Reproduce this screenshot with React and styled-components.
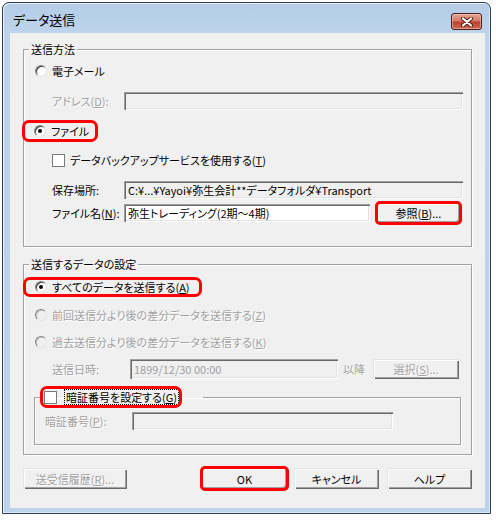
import styled, { createGlobalStyle } from 'styled-components';

const GlobalStyle = createGlobalStyle`
  body {
    margin: 0;
    background: #fff;
    font-family: "Noto Sans CJK JP", "Noto Sans", sans-serif;
    font-size: 11px;
    font-feature-settings: "palt";
  }
`;

const App = () => {
  return (
    <>
      <GlobalStyle />
      <Window>
        <TitleBar>
          <Title>データ送信</Title>
          <CloseBtn>
            <svg width="14" height="10" viewBox="0 0 14 10">
              <path d="M3 1.5 L11 8.5 M11 1.5 L3 8.5" stroke="#4a1c14" strokeWidth="4" strokeLinecap="round" />
              <path d="M3 1.5 L11 8.5 M11 1.5 L3 8.5" stroke="#fff" strokeWidth="2.2" strokeLinecap="round" />
            </svg>
          </CloseBtn>
        </TitleBar>
        <Body>
          <Group $mt={9} $pb={23}>
            <Legend>送信方法</Legend>
            <Row $mt={5} $pl={11}>
              <Radio />
              <Text>電子メール</Text>
            </Row>
            <Row $mt={10} $pl={28}>
              <FieldLabel $w={72} $disabled>アドレス(<u>D</u>):</FieldLabel>
              <Field $w={339} $gray />
            </Row>
            <Row $mt={10} $pl={1}>
              <Highlight $pl={9} $pr={6} $h={16}>
                <Radio $checked />
                <Text>ファイル</Text>
              </Highlight>
            </Row>
            <Row $mt={9} $pl={28}>
              <Check />
              <Text>データバックアップサービスを使用する(<u>T</u>)</Text>
            </Row>
            <Row $mt={10} $pl={28}>
              <FieldLabel $w={72}>保存場所:</FieldLabel>
              <Field $w={339} $gray>C:¥...¥Yayoi¥弥生会計**データフォルダ¥Transport</Field>
            </Row>
            <Row $mt={3} $pl={28}>
              <FieldLabel $w={72}>ファイル名(<u>N</u>):</FieldLabel>
              <Field $w={246}>弥生トレーディング(2期〜4期)</Field>
              <Button $w={83} $ml={7} $red>参照(<u>B</u>)...</Button>
            </Row>
          </Group>

          <Group $mt={10} $pb={9}>
            <Legend>送信するデータの設定</Legend>
            <Row $mt={6} $pl={2}>
              <Highlight $pl={9} $pr={9} $h={14}>
                <Radio $checked />
                <Text>すべてのデータを送信する(<u>A</u>)</Text>
              </Highlight>
            </Row>
            <Row $mt={8} $pl={11}>
              <Radio $disabled />
              <Text $disabled>前回送信分より後の差分データを送信する(<u>Z</u>)</Text>
            </Row>
            <Row $mt={7} $pl={11}>
              <Radio $disabled />
              <Text $disabled>過去送信分より後の差分データを送信する(<u>K</u>)</Text>
            </Row>
            <Row $mt={7} $pl={28}>
              <FieldLabel $w={78} $disabled>送信日時:</FieldLabel>
              <Field $w={208} $h={20} $gray $disabled>1899/12/30 00:00</Field>
              <Text $disabled $ml={5}>以降</Text>
              <Button $w={86} $ml={8} $disabled>選択(<u>S</u>)...</Button>
            </Row>
            <InnerGroup>
              <InnerLegend>
                <Highlight $pl={1} $pr={1} $h={16}>
                  <Check />
                  <Focus>暗証番号を設定する(<u>G</u>)</Focus>
                </Highlight>
              </InnerLegend>
              <Row $mt={4} $pl={10}>
                <FieldLabel $w={87} $disabled>暗証番号(<u>P</u>):</FieldLabel>
                <Field $w={261} $gray />
              </Row>
            </InnerGroup>
          </Group>

          <Footer>
            <Button $w={104} $h={21} $disabled>送受信履歴(<u>R</u>)...</Button>
            <Button $w={85} $h={21} $ml="auto" $red>OK</Button>
            <Button $w={85} $h={21} $ml={7}>キャンセル</Button>
            <Button $w={85} $h={21} $ml={8}>ヘルプ</Button>
          </Footer>
        </Body>
      </Window>
    </>
  );
};

const Window = styled.div`
  margin: 2px 0 0 2px;
  width: 487px;
  border: 1px solid #2e3e52;
  border-radius: 7px 7px 0 0;
  background: linear-gradient(to bottom, #b4cce7 0, #bed4ec 30px, #bcd3eb 100%);
  box-shadow: inset 1px 1px 0 rgba(255, 255, 255, 0.7), inset -1px -1px 0 rgba(255, 255, 255, 0.5);
`;

const TitleBar = styled.div`
  display: flex;
  align-items: center;
  height: 30px;
  padding: 3px 8px 0 10px;
  box-sizing: border-box;
`;

const Title = styled.div`
  font-size: 13px;
  line-height: 16px;
  color: #000;
  flex: 1;
`;

const CloseBtn = styled.div`
  display: flex;
  align-items: center;
  justify-content: center;
  width: 31px;
  height: 17px;
  margin-top: 4px;
  box-sizing: border-box;
  border: 1px solid #4b1f18;
  border-radius: 3px;
  background: linear-gradient(to bottom, #e4a596 0, #d37a67 45%, #b9412d 55%, #cf6a52 100%);
  box-shadow: inset 0 0 0 1px rgba(255, 220, 210, 0.45);
`;

const Body = styled.div`
  margin: 0 5px 5px 7px;
  height: 475px;
  box-sizing: border-box;
  padding: 0 13px;
  background: #f0f0f0;
  display: flex;
  flex-direction: column;
  overflow: hidden;
`;

const Group = styled.fieldset`
  margin: ${p => p.$mt}px 0 0;
  padding: 0 0 ${p => p.$pb}px;
  border: 1px solid #a0a0a0;
  box-shadow: 1px 1px 0 #fff, inset 1px 1px 0 #fff;
  display: flex;
  flex-direction: column;
  min-width: 0;
`;

const Legend = styled.legend`
  margin-left: 5px;
  padding: 0 2px;
  line-height: 14px;
  height: 14px;
  color: #000;
`;

const InnerGroup = styled(Group)`
  margin: 8px 10px 0 10px;
  padding: 0 0 13px;
`;

const InnerLegend = styled.legend`
  margin-left: 8px;
  padding: 0;
  width: 160px;
  height: 20px;
  display: flex;
  align-items: center;
`;

const Row = styled.div`
  display: flex;
  align-items: center;
  height: 20px;
  margin-top: ${p => p.$mt || 0}px;
  padding-left: ${p => p.$pl || 0}px;
`;

const Highlight = styled.span`
  display: inline-flex;
  align-items: center;
  height: ${p => p.$h}px;
  padding: 0 ${p => p.$pr}px 0 ${p => p.$pl}px;
  outline: 3px solid #f00;
  border-radius: 4px;
`;

const Text = styled.span`
  line-height: 14px;
  white-space: nowrap;
  margin-left: ${p => p.$ml || 0}px;
  color: ${p => (p.$disabled ? '#a0a0a0' : '#000')};
  text-shadow: ${p => (p.$disabled ? '1px 1px 0 #fff' : 'none')};
`;

const Focus = styled.span`
  line-height: 14px;
  white-space: nowrap;
  margin-left: 3px;
  padding: 0 1px;
  outline: 1px dotted #000;
`;

const FieldLabel = styled(Text)`
  width: ${p => p.$w}px;
  flex-shrink: 0;
`;

const Radio = styled.span`
  position: relative;
  flex-shrink: 0;
  width: 12px;
  height: 12px;
  margin-right: 5px;
  box-sizing: border-box;
  border-radius: 50%;
  border: 1px solid;
  border-color: #808080 #e3e3e3 #e3e3e3 #808080;
  background: ${p => (p.$disabled ? '#f0f0f0' : '#fff')};
  box-shadow: inset 1px 1px 0 ${p => (p.$disabled ? '#c8c8c8' : '#404040')};

  &::after {
    content: '';
    display: ${p => (p.$checked ? 'block' : 'none')};
    position: absolute;
    left: 3px;
    top: 3px;
    width: 4px;
    height: 4px;
    border-radius: 50%;
    background: #000;
  }
`;

const Check = styled.span`
  flex-shrink: 0;
  width: 13px;
  height: 13px;
  margin-right: 5px;
  box-sizing: border-box;
  border: 1px solid #7a7a7a;
  background: #fff;
`;

const Field = styled.div`
  flex-shrink: 0;
  width: ${p => p.$w}px;
  height: ${p => p.$h || 18}px;
  box-sizing: border-box;
  padding: 0 4px;
  display: flex;
  align-items: center;
  white-space: nowrap;
  overflow: hidden;
  background: ${p => (p.$gray ? '#f0f0f0' : '#fff')};
  color: ${p => (p.$disabled ? '#a0a0a0' : '#000')};
  box-shadow: inset 1px 1px 0 #a0a0a0, inset 2px 2px 0 #696969, inset -1px -1px 0 #fff, inset -2px -2px 0 #e3e3e3;
`;

const Button = styled.div`
  flex-shrink: 0;
  width: ${p => p.$w}px;
  height: ${p => p.$h || 20}px;
  margin-left: ${p => (p.$ml === 'auto' ? 'auto' : `${p.$ml || 0}px`)};
  box-sizing: border-box;
  display: flex;
  align-items: center;
  justify-content: center;
  white-space: nowrap;
  background: #f0f0f0;
  color: ${p => (p.$disabled ? '#a0a0a0' : '#000')};
  text-shadow: ${p => (p.$disabled ? '1px 1px 0 #fff' : 'none')};
  box-shadow: inset 1px 1px 0 #e3e3e3, inset 2px 2px 0 #fff, inset -1px -1px 0 #696969, inset -2px -2px 0 #a0a0a0;
  outline: ${p => (p.$red ? '3px solid #f00' : 'none')};
  outline-offset: -1px;
  border-radius: ${p => (p.$red ? '3px' : '0')};
`;

const Footer = styled.div`
  display: flex;
  align-items: center;
  margin-top: 13px;
`;

export default App;
